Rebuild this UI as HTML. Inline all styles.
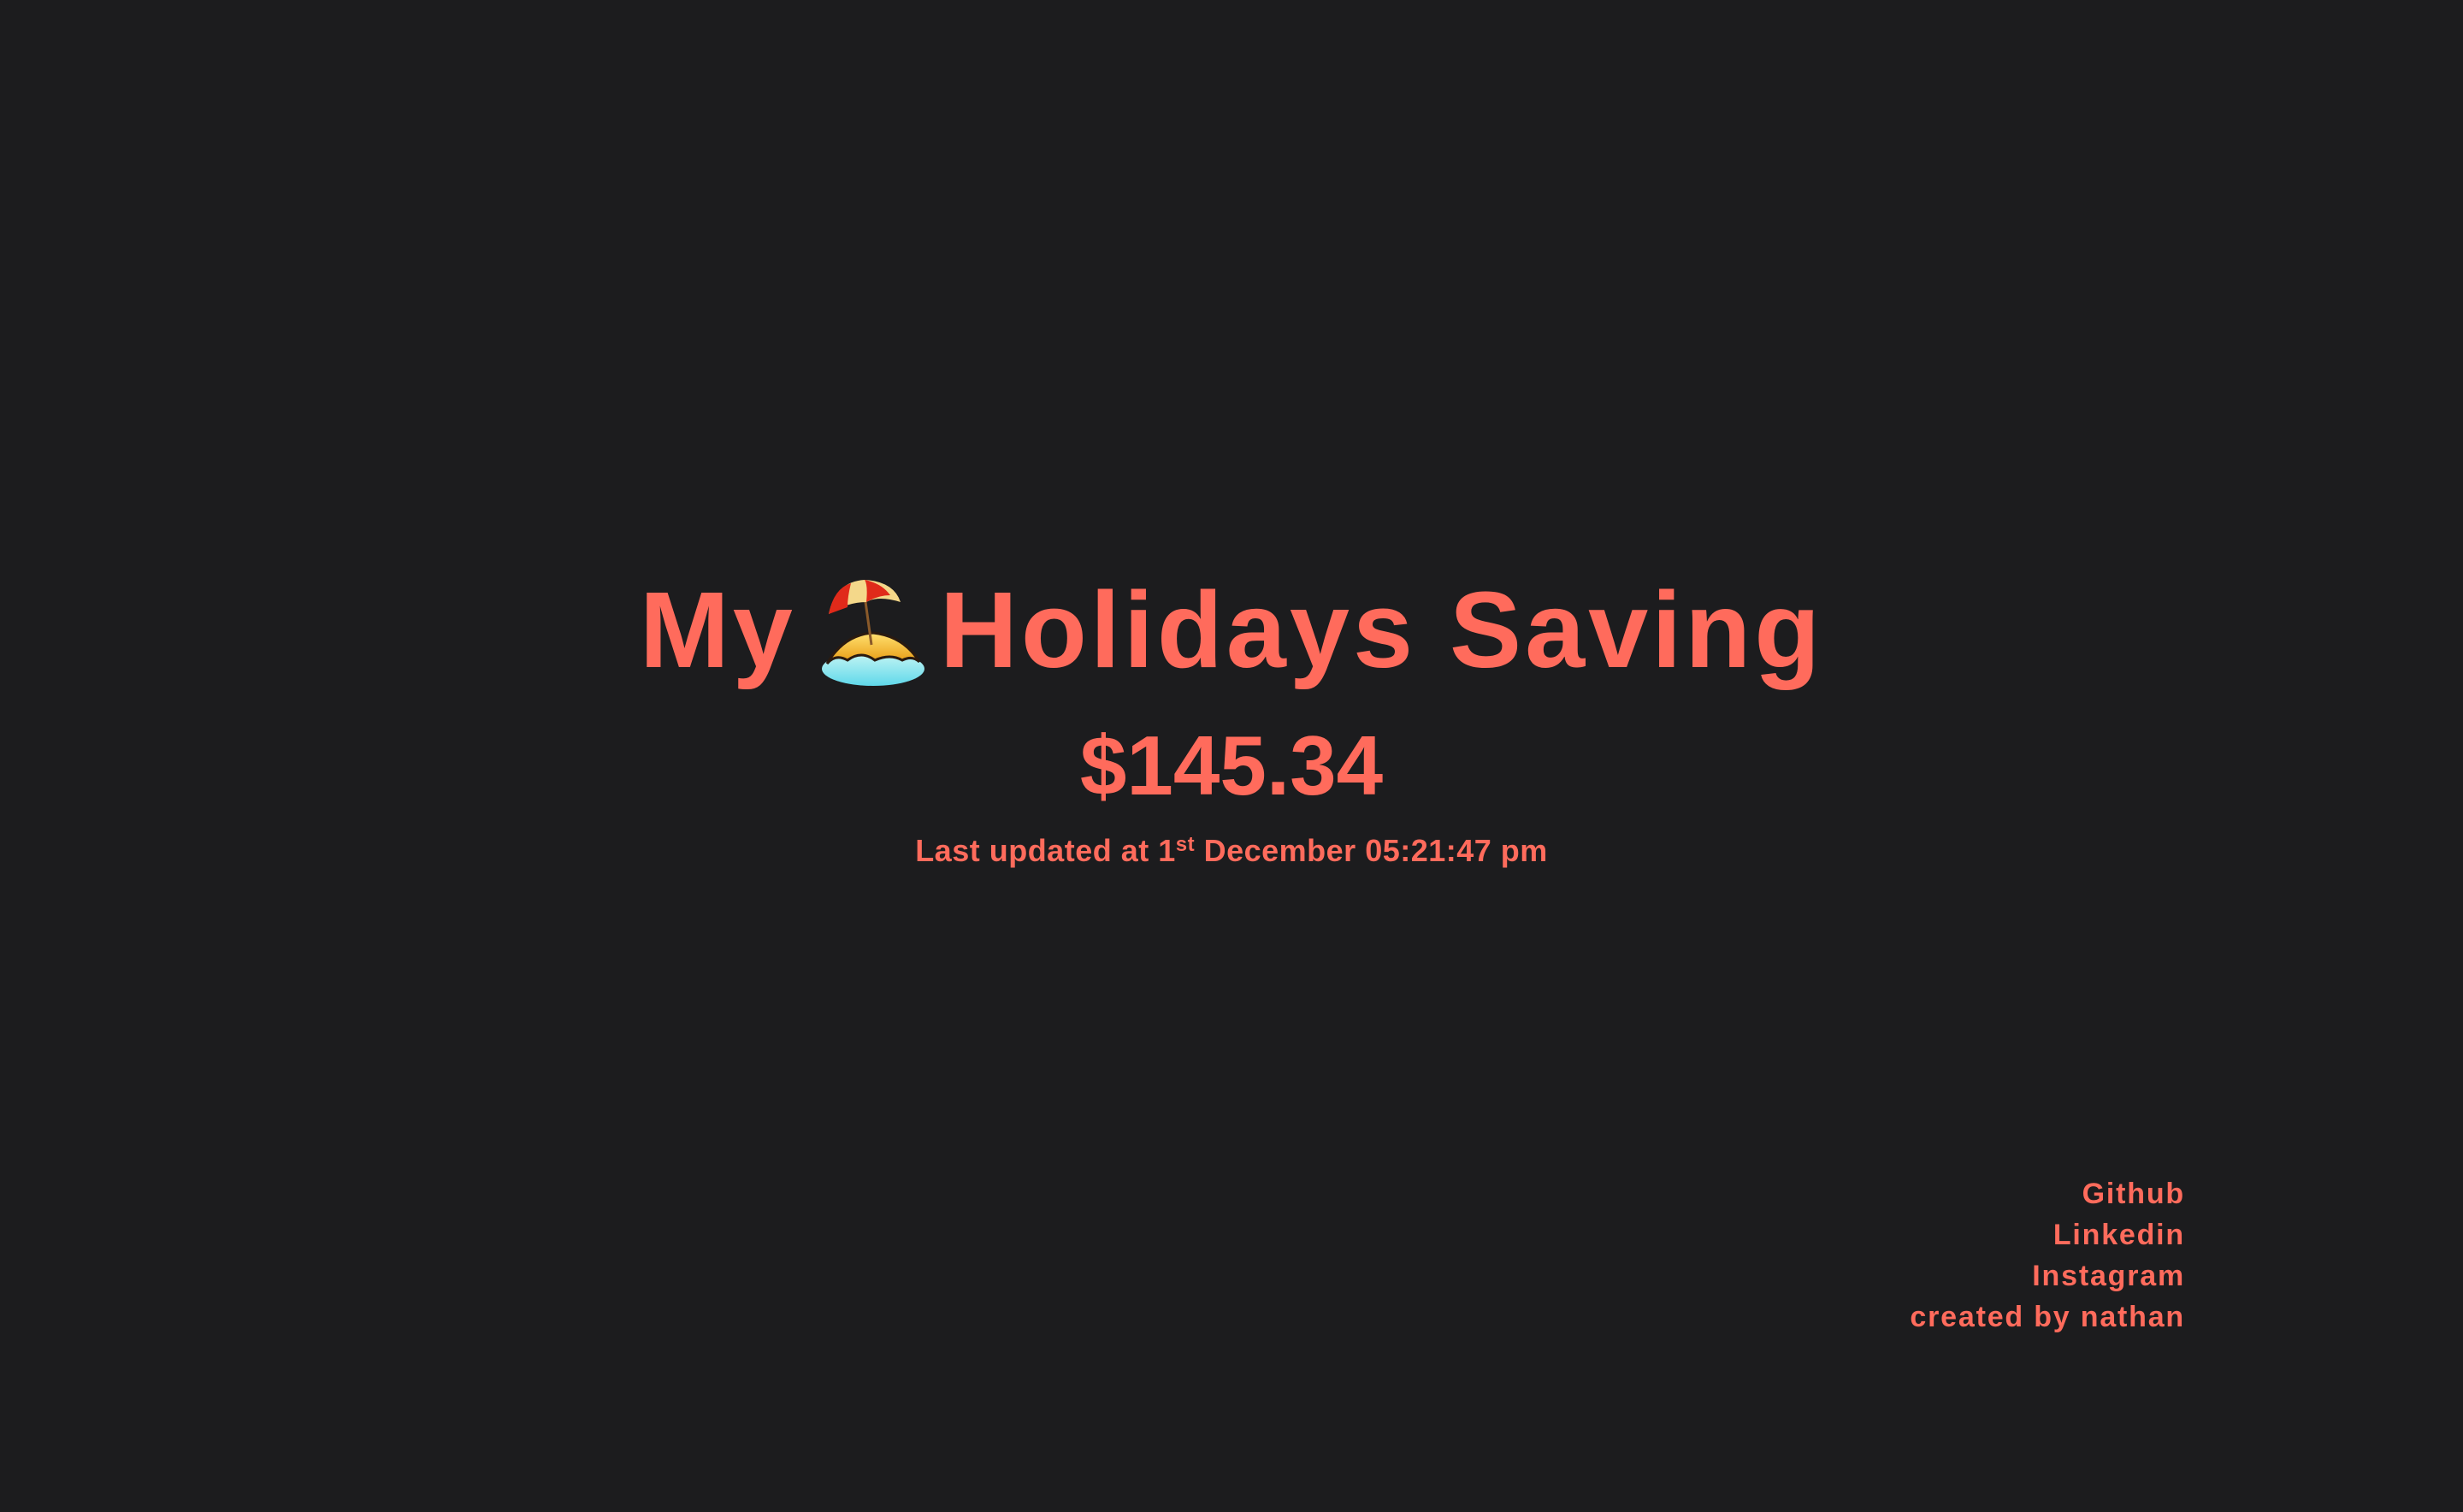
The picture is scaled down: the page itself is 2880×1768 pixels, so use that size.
<!DOCTYPE html>
<html><head><meta charset="utf-8"><style>
html,body{margin:0;padding:0;width:2880px;height:1768px;background:#1c1c1e;overflow:hidden}
body{font-family:"Liberation Sans",sans-serif;font-weight:bold;color:#ff6b5c;position:relative}
.c{position:absolute;left:0;width:2880px;text-align:center;white-space:nowrap}
#t{top:657px;font-size:126px;line-height:160px;letter-spacing:4px}
#t svg{vertical-align:-22px;margin:0 14px 0 26px}
#a{top:835px;font-size:98px;line-height:120px;letter-spacing:0px}
#u{top:970px;font-size:36px;line-height:50px;letter-spacing:0.5px}
#u sup{font-size:24px;vertical-align:12px;line-height:0}
#f{position:absolute;right:325px;top:1372px;text-align:right;font-size:34px;line-height:48px;letter-spacing:1.8px}
</style></head><body>
<div class="c" id="t">My<svg width="128" height="128" viewBox="0 0 128 128">
<defs><linearGradient id="s" x1="0" y1="0" x2="0" y2="1"><stop offset="0" stop-color="#ffe070"/><stop offset="1" stop-color="#e89a10"/></linearGradient>
<linearGradient id="w" x1="0" y1="0" x2="0" y2="1"><stop offset="0" stop-color="#c9f6f4"/><stop offset="1" stop-color="#5fd8ea"/></linearGradient></defs>
<ellipse cx="64" cy="108" rx="60" ry="20" fill="url(#w)"/>
<path d="M10 102 Q20 90 34 98 Q50 86 66 98 Q84 90 98 98 Q110 92 118 100 Q100 70 64 66 Q30 68 10 102Z" fill="url(#s)" stroke="#2a1a10" stroke-width="3"/>
<line x1="52" y1="8" x2="62" y2="80" stroke="#8a5a2a" stroke-width="3"/>
<path d="M12 44 Q20 6 54 4 Q88 6 96 30 Q70 22 56 30 Q34 30 12 44Z" fill="#f4d88a"/>
<path d="M12 44 Q18 14 38 8 Q34 24 34 36Z M56 30 Q58 10 54 4 Q74 8 84 22 Q70 22 56 30Z" fill="#e02a1a"/>
</svg>Holidays Saving</div>
<div class="c" id="a">$145.34</div>
<div class="c" id="u">Last updated at 1<sup>st</sup> December 05:21:47 pm</div>
<div id="f">Github<br>Linkedin<br>Instagram<br>created by nathan</div>
</body></html>
